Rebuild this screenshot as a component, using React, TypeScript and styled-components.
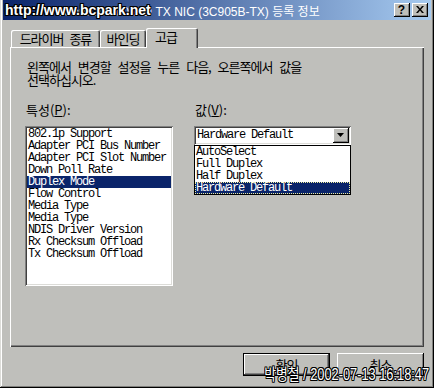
import React from 'react';
import styled, { createGlobalStyle } from 'styled-components';

const BG = '#bfbfbb';
const KR = `"Noto Sans CJK KR", "Noto Sans", sans-serif`;
const MONO = `"Liberation Mono", "DejaVu Sans Mono", monospace`;
const NAVY = '#0a246a';

const GlobalStyle = createGlobalStyle`
  html, body { margin: 0; padding: 0; background: ${BG}; }
  body { width: 434px; height: 388px; overflow: hidden; }
  *, *::before, *::after { box-sizing: border-box; }
`;

const Window = styled.div`
  position: relative;
  width: 434px;
  height: 388px;
  background: ${BG};
  padding: 0 3px 3px 3px;
  display: flex;
  flex-direction: column;
  box-shadow: inset -1px -1px #000, inset 1px 0 #dcdcd8, inset -2px -2px #7f7f7c, inset 2px 0 #fff;
  font-family: ${KR};
  font-size: 13px;
  letter-spacing: -1px;
  word-spacing: 4px;
  color: #000;
`;

const TitleBar = styled.div`
  position: relative;
  flex: none;
  height: 20px;
  background: linear-gradient(to right, ${NAVY}, #a6caf0);
  display: flex;
  align-items: center;
  padding: 0 3px 0 54px;
  letter-spacing: 0;
  word-spacing: 0;
`;

const TitleText = styled.span`
  flex: 1;
  color: #fff;
  font-family: "Liberation Sans", "Noto Sans CJK KR", sans-serif;
  font-size: 12px;
  white-space: nowrap;
  overflow: hidden;
`;

const outline = `-1px -1px 0 #000, 1px -1px 0 #000, -1px 1px 0 #000, 1px 1px 0 #000, 0 1px 0 #000, 0 -1px 0 #000, 1px 0 0 #000, -1px 0 0 #000`;

const TopMark = styled.span`
  position: absolute;
  left: 2px;
  top: 2px;
  color: #fff;
  font-family: "Liberation Sans", sans-serif;
  font-weight: bold;
  font-size: 14px;
  letter-spacing: 0;
  line-height: 16px;
  text-shadow: ${outline};
  white-space: nowrap;
`;

const BottomMark = styled.span`
  position: absolute;
  right: 5px;
  bottom: 4px;
  color: #fff;
  font-family: "Liberation Sans", "Noto Sans CJK KR", sans-serif;
  font-size: 16px;
  letter-spacing: 0;
  word-spacing: 0;
  line-height: 18px;
  text-shadow: ${outline};
  white-space: nowrap;
  transform: scaleX(0.8);
  transform-origin: right center;
  z-index: 5;
`;

const CaptionButtons = styled.div`
  display: flex;
  gap: 2px;
`;

const CaptionButton = styled.div`
  width: 16px;
  height: 14px;
  background: ${BG};
  box-shadow: inset -1px -1px #000, inset 1px 1px #fff, inset -2px -2px #808080;
  display: flex;
  align-items: center;
  justify-content: center;
  font-family: "Liberation Sans", sans-serif;
  font-weight: bold;
  font-size: 12px;
  line-height: 1;
  padding: 0 1px 1px 0;
`;

const Body = styled.div`
  flex: 1;
  display: flex;
  flex-direction: column;
  padding: 8px 7px 0 7px;
`;

const TabStrip = styled.div`
  display: flex;
  align-items: flex-end;
  height: 19px;
  padding-left: 1px;
`;

const Tab = styled.div<{ $active?: boolean; $w: number }>`
  position: relative;
  z-index: ${(p) => (p.$active ? 1 : 0)};
  width: ${(p) => p.$w}px;
  height: ${(p) => (p.$active ? 20 : 17)}px;
  margin-bottom: ${(p) => (p.$active ? -1 : 0)}px;
  background: ${BG};
  border-radius: 2px 2px 0 0;
  box-shadow: inset 1px 1px #fff, inset -1px 0 #404040, inset -2px 0 #808080;
  text-align: ${(p) => (p.$active ? 'left' : 'center')};
  padding: ${(p) => (p.$active ? '1px 0 0 9px' : '0')};
  line-height: ${(p) => (p.$active ? 15 : 17)}px;
  white-space: nowrap;
`;

const Panel = styled.div`
  height: 300px;
  background: ${BG};
  box-shadow: inset 1px 1px #fff, inset -1px -1px #404040, inset -2px -2px #808080;
  padding: 13px 0 0 16px;
  display: flex;
  flex-direction: column;
`;

const Description = styled.p`
  margin: 0 0 0 1px;
  line-height: 13px;
  word-spacing: 5px;
`;

const Columns = styled.div`
  display: flex;
  gap: 21px;
  margin: 17px 0 0 -1px;
`;

const Column = styled.div<{ $w: number }>`
  width: ${(p) => p.$w}px;
  display: flex;
  flex-direction: column;
  gap: 10px;
`;

const Label = styled.div`
  margin-left: 1px;
  line-height: 13px;
  letter-spacing: 0;
  u { text-decoration: underline; text-underline-offset: 1px; }
`;

const sunken = `inset 1px 1px #808080, inset -1px -1px #fff, inset 2px 2px #404040, inset -2px -2px #dcdcd8`;

const ListBox = styled.div`
  height: 160px;
  background: #fff;
  box-shadow: ${sunken};
  padding: 2px;
`;

const Item = styled.div<{ $selected?: boolean; $focus?: boolean }>`
  height: 12px;
  line-height: 12px;
  padding-left: 1px;
  font-family: ${MONO};
  font-size: 12px;
  letter-spacing: -1.2px;
  word-spacing: 0;
  white-space: nowrap;
  background: ${(p) => (p.$selected ? NAVY : 'transparent')};
  color: ${(p) => (p.$selected ? '#fff' : '#000')};
  outline: ${(p) => (p.$focus ? '1px dotted #f0f0a0' : 'none')};
  outline-offset: -1px;
`;

const ComboWrap = styled.div`
  position: relative;
`;

const Combo = styled.div`
  height: 19px;
  background: #fff;
  box-shadow: ${sunken};
  padding: 2px;
  display: flex;
  align-items: stretch;
`;

const ComboText = styled.div`
  flex: 1;
  padding-left: 1px;
  line-height: 15px;
  font-family: ${MONO};
  font-size: 12px;
  letter-spacing: -1.2px;
  word-spacing: 0;
  white-space: nowrap;
`;

const ComboButton = styled.div`
  width: 16px;
  background: ${BG};
  box-shadow: inset -1px -1px #000, inset 1px 1px #fff, inset -2px -2px #808080;
  display: flex;
  align-items: center;
  justify-content: center;
  padding: 0 1px 1px 0;
`;

const DropList = styled.div`
  position: absolute;
  left: 0;
  top: 19px;
  width: 100%;
  border: 1px solid #000;
  background: #fff;
  z-index: 3;
`;

const ButtonRow = styled.div`
  display: flex;
  justify-content: flex-end;
  gap: 7px;
  margin-top: 6px;
`;

const Button = styled.div<{ $default?: boolean }>`
  width: 87px;
  height: 23px;
  background: ${BG};
  border: ${(p) => (p.$default ? '1px solid #000' : 'none')};
  box-shadow: ${(p) =>
    p.$default
      ? 'inset -1px -1px #404040, inset 1px 1px #fff, inset -2px -2px #808080'
      : 'inset -1px -1px #000, inset 1px 1px #fff, inset -2px -2px #808080'};
  display: flex;
  align-items: center;
  justify-content: center;
  line-height: 13px;
  padding-bottom: 1px;
`;

const props = [
  '802.1p Support',
  'Adapter PCI Bus Number',
  'Adapter PCI Slot Number',
  'Down Poll Rate',
  'Duplex Mode',
  'Flow Control',
  'Media Type',
  'Media Type',
  'NDIS Driver Version',
  'Rx Checksum Offload',
  'Tx Checksum Offload',
];

const values = ['AutoSelect', 'Full Duplex', 'Half Duplex', 'Hardware Default'];

export default function App() {
  return (
    <>
      <GlobalStyle />
      <Window>
        <TitleBar>
          <TitleText>3Com 10/100 PCI TX NIC (3C905B-TX) 등록 정보</TitleText>
          <TopMark>http://www.bcpark.net</TopMark>
          <CaptionButtons>
            <CaptionButton>?</CaptionButton>
            <CaptionButton>
              <svg width="8" height="7" viewBox="0 0 8 7">
                <path d="M0 0h2l2 2.5L6 0h2L5 3.5 8 7H6L4 4.5 2 7H0l3-3.5z" fill="#000" />
              </svg>
            </CaptionButton>
          </CaptionButtons>
        </TitleBar>
        <Body>
          <TabStrip>
            <Tab $w={89}>드라이버 종류</Tab>
            <Tab $w={46}>바인딩</Tab>
            <Tab $w={52} $active>고급</Tab>
          </TabStrip>
          <Panel>
            <Description>
              왼쪽에서 변경할 설정을 누른 다음, 오른쪽에서 값을
              <br />
              선택하십시오.
            </Description>
            <Columns>
              <Column $w={148}>
                <Label>
                  특성(<u>P</u>):
                </Label>
                <ListBox>
                  {props.map((p, i) => (
                    <Item key={i} $selected={p === 'Duplex Mode'}>
                      {p}
                    </Item>
                  ))}
                </ListBox>
              </Column>
              <Column $w={157}>
                <Label>
                  값(<u>V</u>):
                </Label>
                <ComboWrap>
                  <Combo>
                    <ComboText>Hardware Default</ComboText>
                    <ComboButton>
                      <svg width="7" height="4" viewBox="0 0 7 4">
                        <path d="M0 0h7L3.5 4z" fill="#000" />
                      </svg>
                    </ComboButton>
                  </Combo>
                  <DropList>
                    {values.map((v) => (
                      <Item key={v} $selected={v === 'Hardware Default'} $focus={v === 'Hardware Default'}>
                        {v}
                      </Item>
                    ))}
                  </DropList>
                </ComboWrap>
              </Column>
            </Columns>
          </Panel>
          <ButtonRow>
            <Button $default>확인</Button>
            <Button>취소</Button>
          </ButtonRow>
        </Body>
        <BottomMark>박병철 / 2002-07-13 16:18:47</BottomMark>
      </Window>
    </>
  );
}
